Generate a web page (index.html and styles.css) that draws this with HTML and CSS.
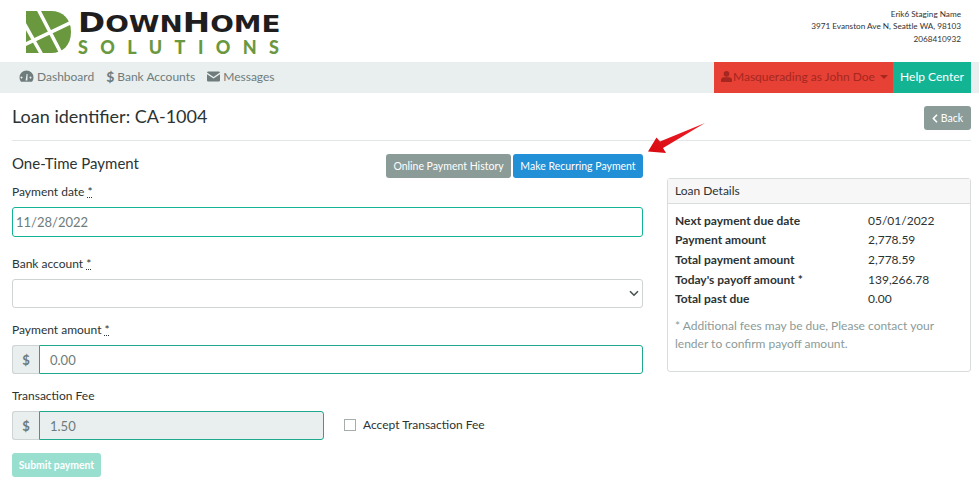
FILE: index.html
```html
<!DOCTYPE html>
<html lang="en">
<head>
<meta charset="utf-8">
<title>One-Time Payment</title>
<link rel="stylesheet" href="styles.css">
</head>
<body>
<header class="top">
  <div class="logo">
    <svg class="logo-mark" width="45" height="42" viewBox="0 0 45 42">
      <path fill="#6a983f" d="M0 0H25C37 0 45 8 45 21C45 34 37 42 25 42H0Z"/>
      <path fill="none" stroke="#fff" stroke-width="3.500" d="M12 -2L36 44M-2 34L46 11M-2 12L16 44"/>
    </svg>
    <div class="logo-text">
      <div class="logo-top"><span class="cap">D</span>OWN<span class="cap">H</span>OME</div>
      <div class="logo-bottom">SOLUTIONS</div>
    </div>
  </div>
  <address class="company">
    <div>Erik6 Staging Name</div>
    <div>3971 Evanston Ave N, Seattle WA, 98103</div>
    <div>2068410932</div>
  </address>
</header>
<nav class="nav">
  <div class="nav-links">
    <a class="nav-link"><svg class="ic" width="15" height="13" viewBox="0 0 15 13"><path fill="#6f7c7c" fill-rule="evenodd" d="M7.500 .5A7 7 0 0 1 14.500 7.500C14.500 9 14 10.500 13 11.800H2C1 10.500 .5 9 .5 7.500A7 7 0 0 1 7.500 .5ZM6.600 10.500H8.400L8.600 4H7.600ZM2.500 6.500a1 1 0 1 0 .01 0ZM11.500 6.500a1 1 0 1 0 .01 0Z"/></svg>Dashboard</a>
    <a class="nav-link"><span class="dollar">$</span>Bank Accounts</a>
    <a class="nav-link"><svg class="ic" width="13" height="11" viewBox="0 0 13 11"><path fill="#6f7c7c" d="M0 1.500A1.200 1.200 0 0 1 1.200 .5H11.800A1.200 1.200 0 0 1 13 1.500L6.500 6 0 1.500ZM0 3.200L6.500 7.600 13 3.200V9.300A1.200 1.200 0 0 1 11.800 10.500H1.200A1.200 1.200 0 0 1 0 9.300Z"/></svg>Messages</a>
  </div>
  <div class="nav-actions">
    <a class="masq"><svg class="ic-user" width="11" height="11" viewBox="0 0 12 12"><path fill="#a5271f" d="M6 0a3 3 0 1 1 0 6.200A3 3 0 0 1 6 0ZM0 12V9.800C0 8 1.500 6.800 3 6.800H9C10.500 6.800 12 8 12 9.800V12Z"/></svg>Masquerading as John Doe<span class="caret"></span></a>
    <a class="help">Help Center</a>
  </div>
</nav>
<main class="main">
  <div class="title-row">
    <h1 class="title">Loan identifier: CA-1004</h1>
    <a class="btn btn-grey btn-back"><svg width="6" height="9" viewBox="0 0 6 9"><path fill="none" stroke="#fff" stroke-width="1.600" d="M5 .8L1.400 4.500 5 8.200"/></svg>Back</a>
  </div>
  <div class="columns">
    <section class="form">
      <div class="form-head">
        <h2 class="subtitle">One-Time Payment</h2>
        <div class="head-btns">
          <a class="btn btn-grey">Online Payment History</a>
          <a class="btn btn-blue">Make Recurring Payment</a>
        </div>
      </div>
      <label class="label label-first">Payment date <abbr class="req">*</abbr></label>
      <div class="field field-date">11/28/2022</div>
      <label class="label">Bank account <abbr class="req">*</abbr></label>
      <div class="field field-select">
        <svg width="10" height="7" viewBox="0 0 10 7"><path fill="none" stroke="#4a5252" stroke-width="1.600" d="M1 1.200L5 5.200 9 1.200"/></svg>
      </div>
      <label class="label">Payment amount <abbr class="req">*</abbr></label>
      <div class="group">
        <span class="addon">$</span>
        <div class="field field-group">0.00</div>
      </div>
      <label class="label">Transaction Fee</label>
      <div class="fee-row">
        <div class="group group-fee">
          <span class="addon">$</span>
          <div class="field field-group field-disabled">1.50</div>
        </div>
        <label class="check"><span class="box"></span>Accept Transaction Fee</label>
      </div>
      <a class="btn btn-submit">Submit payment</a>
    </section>
    <aside class="card">
      <div class="card-head">Loan Details</div>
      <div class="card-body">
        <dl class="details">
          <dt>Next payment due date</dt><dd>05/01/2022</dd>
          <dt>Payment amount</dt><dd>2,778.59</dd>
          <dt>Total payment amount</dt><dd>2,778.59</dd>
          <dt>Today's payoff amount *</dt><dd>139,266.78</dd>
          <dt>Total past due</dt><dd>0.00</dd>
        </dl>
        <p class="note">* Additional fees may be due, Please contact your lender to confirm payoff amount.</p>
      </div>
    </aside>
  </div>
</main>
<svg class="arrow" width="66" height="36" viewBox="0 0 66 36"><defs><linearGradient id="g" x1="1" y1="0" x2="0" y2="1"><stop offset="0" stop-color="#f0202a"/><stop offset="1" stop-color="#d80a10"/></linearGradient></defs><path fill="url(#g)" d="M64 1L22 26 25 31 7 29.500 15.500 15.500 19 19.500Z"/></svg>
</body>
</html>
```
FILE: styles.css
```css
* { box-sizing: border-box; }
html, body { margin: 0; padding: 0; }
body {
  position: relative;
  width: 979px;
  height: 487px;
  overflow: hidden;
  background: #fff;
  color: #2c3333;
  font-family: Lato, "Liberation Sans", sans-serif;
  font-size: 13px;
}
.top {
  height: 62px;
  display: flex;
  justify-content: space-between;
  padding: 11px 18px 0 26px;
}
.logo { display: flex; gap: 7px; }
.logo-mark { display: block; }
.logo-text { width: 205px; padding-top: 1px; }
.logo-top {
  font-family: "DejaVu Sans", sans-serif;
  font-weight: 700;
  font-size: 23px;
  line-height: 22px;
  color: #201d1e;
  white-space: nowrap;
  transform: scaleX(1.21);
  transform-origin: left center;
}
.logo-top .cap { font-size: 27px; }
.logo-bottom {
  margin-top: 5px;
  font-family: Lato, sans-serif;
  font-weight: 900;
  font-size: 18px;
  line-height: 15px;
  letter-spacing: 12.400px;
  color: #6a983f;
  white-space: nowrap;
}
.company {
  font-style: normal;
  text-align: right;
  font-size: 8.200px;
  line-height: 12.300px;
  margin-top: -3px;
  color: #333;
}
.nav {
  height: 31px;
  background: #e9eeee;
  display: flex;
  justify-content: space-between;
  padding: 0 8px 0 19px;
  font-size: 12px;
}
.nav-links { display: flex; align-items: center; gap: 12px; padding-bottom: 2px; }
.nav-link { display: flex; align-items: center; gap: 3px; color: #6f7c7c; }
.dollar { font-weight: 700; font-size: 14px; }
.nav-actions { display: flex; }
.masq {
  width: 179px;
  background: #e74136;
  color: #a5271f;
  display: flex;
  align-items: center;
  padding: 0 0 2px 7px;
  gap: 1px;
  white-space: nowrap;
}
.caret {
  margin-left: 4px;
  border-top: 4px solid #a5271f;
  border-left: 4px solid transparent;
  border-right: 4px solid transparent;
}
.help {
  width: 78px;
  background: #13b494;
  color: #fff;
  display: flex;
  align-items: center;
  justify-content: center;
  padding-bottom: 2px;
}
.main { padding: 0 8px 0 12px; }
.title-row {
  height: 48px;
  display: flex;
  justify-content: space-between;
  align-items: flex-start;
  padding-top: 13px;
  border-bottom: 1px solid #e3e6e6;
}
.title { margin: -1px 0 0; font-size: 18px; line-height: 22px; font-weight: 400; color: #2c3333; }
.btn {
  display: inline-flex;
  align-items: center;
  justify-content: center;
  height: 24px;
  border-radius: 3px;
  color: #fff;
  font-size: 10.500px;
  white-space: nowrap;
}
.btn-grey { background: #8b9b98; }
.btn-blue { background: #2190d6; }
.btn-back { width: 47px; gap: 3px; }
.columns { display: flex; justify-content: space-between; }
.form { width: 631px; }
.form-head { display: flex; justify-content: space-between; height: 44px; padding-top: 13px; }
.subtitle { margin: -1px 0 0; font-size: 15px; line-height: 20px; font-weight: 400; }
.head-btns { display: flex; gap: 2px; height: 24px; }
.head-btns .btn-grey { width: 125px; }
.head-btns .btn-blue { width: 130px; }
.label { display: block; font-size: 12px; line-height: 13px; margin-top: 15px; margin-bottom: 9px; color: #2c3333; }
.label-first { margin-top: 0; }
.req { text-decoration: underline dotted; }
.field {
  height: 29px;
  border: 1px solid #ced3d3;
  border-radius: 3px;
  display: flex;
  align-items: center;
  color: #6d7b7b;
  background: #fff;
}
.field-date { height: 30px; margin-bottom: 20px; border-color: #13b494; padding-left: 3px; }
.field-select { justify-content: flex-end; padding-right: 3px; }
.group { display: flex; height: 29px; }
.addon {
  width: 27px;
  background: #e9eeee;
  border: 1px solid #ced3d3;
  border-right: 0;
  border-radius: 3px 0 0 3px;
  display: flex;
  align-items: center;
  justify-content: center;
  color: #6d7b7b;
  font-weight: 700;
}
.field-group {
  flex: 1;
  border-color: #1ea98e;
  border-radius: 0 3px 3px 0;
  padding-left: 10px;
}
.field-disabled { background: #e9eeee; }
.fee-row { display: flex; align-items: center; }
.group-fee { width: 312px; }
.check { display: flex; align-items: center; gap: 7px; margin-left: 20px; font-size: 12px; margin-top: -2px; }
.box { width: 12px; height: 12px; border: 1px solid #a5adad; }
.btn-submit {
  display: flex;
  width: 89px;
  margin-top: 13px;
  background: #98dfcf;
  font-size: 10.400px;
  font-weight: 700;
}
.card {
  width: 304px;
  height: 194px;
  margin-top: 37px;
  border: 1px solid #d8dcdc;
  border-radius: 3px;
}
.card-head {
  height: 25px;
  background: #f7f7f7;
  border-bottom: 1px solid #d8dcdc;
  padding: 0 0 1px 7px;
  display: flex;
  align-items: center;
  font-size: 12px;
}
.card-body { padding: 6.600px 7px 0 7px; }
.details {
  display: grid;
  grid-template-columns: 193px 1fr;
  grid-auto-rows: 19.600px;
  align-items: center;
  margin: 0;
  font-size: 12px;
}
.details dt { font-weight: 700; }
.details dd { margin: 0; }
.note { margin: 8px 0 0; font-size: 12px; line-height: 18px; color: #8b9b98; width: 280px; }
.arrow { position: absolute; left: 641px; top: 122px; }
```
